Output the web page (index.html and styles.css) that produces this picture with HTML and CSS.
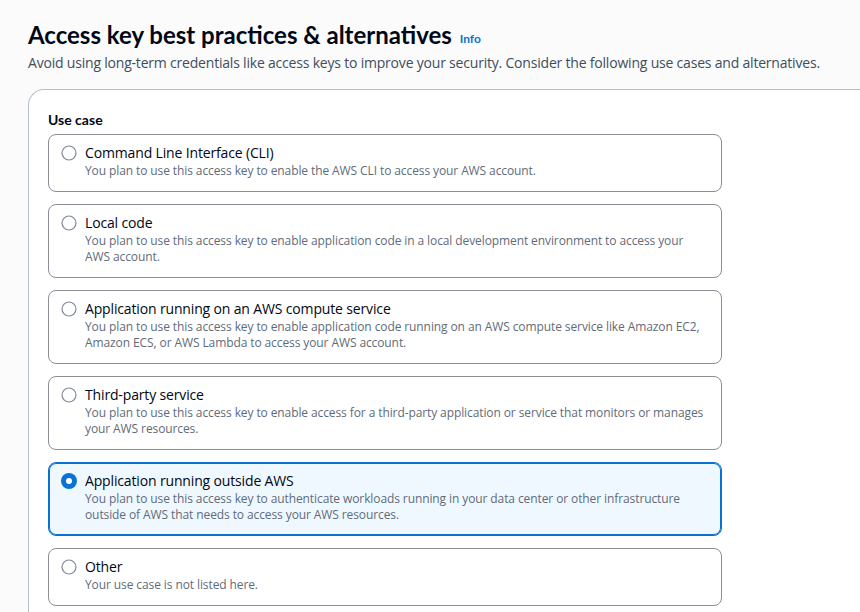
FILE: index.html
```html
<!DOCTYPE html>
<html lang="en">
<head>
<meta charset="utf-8">
<title>Access key best practices &amp; alternatives</title>
<link rel="stylesheet" href="styles.css">
</head>
<body>
<main class="page">
  <header class="header">
    <h1 class="title">Access key best practices &amp; alternatives <a class="info" href="#">Info</a></h1>
    <p class="subtitle">Avoid using long-term credentials like access keys to improve your security. Consider the following use cases and alternatives.</p>
  </header>
  <section class="panel">
    <div class="field-label">Use case</div>
    <div class="tiles">
      <label class="tile">
        <svg class="radio" viewBox="0 0 16 16"><circle cx="8" cy="8" r="7" fill="#fff" stroke="#7d8998" stroke-width="1.2"/></svg>
        <span class="tile-text"><span class="tile-title">Command Line Interface (CLI)</span><span class="tile-desc">You plan to use this access key to enable the AWS CLI to access your AWS account.</span></span>
      </label>
      <label class="tile">
        <svg class="radio" viewBox="0 0 16 16"><circle cx="8" cy="8" r="7" fill="#fff" stroke="#7d8998" stroke-width="1.2"/></svg>
        <span class="tile-text"><span class="tile-title">Local code</span><span class="tile-desc">You plan to use this access key to enable application code in a local development environment to access your AWS account.</span></span>
      </label>
      <label class="tile">
        <svg class="radio" viewBox="0 0 16 16"><circle cx="8" cy="8" r="7" fill="#fff" stroke="#7d8998" stroke-width="1.2"/></svg>
        <span class="tile-text"><span class="tile-title">Application running on an AWS compute service</span><span class="tile-desc">You plan to use this access key to enable application code running on an AWS compute service like Amazon EC2, Amazon ECS, or AWS Lambda to access your AWS account.</span></span>
      </label>
      <label class="tile">
        <svg class="radio" viewBox="0 0 16 16"><circle cx="8" cy="8" r="7" fill="#fff" stroke="#7d8998" stroke-width="1.2"/></svg>
        <span class="tile-text"><span class="tile-title">Third-party service</span><span class="tile-desc">You plan to use this access key to enable access for a third-party application or service that monitors or manages your AWS resources.</span></span>
      </label>
      <label class="tile tile-selected">
        <svg class="radio" viewBox="0 0 16 16"><circle cx="8" cy="8" r="8" fill="#0972d3"/><circle cx="8" cy="8" r="3" fill="#fff"/></svg>
        <span class="tile-text"><span class="tile-title">Application running outside AWS</span><span class="tile-desc">You plan to use this access key to authenticate workloads running in your data center or other infrastructure outside of AWS that needs to access your AWS resources.</span></span>
      </label>
      <label class="tile">
        <svg class="radio" viewBox="0 0 16 16"><circle cx="8" cy="8" r="7" fill="#fff" stroke="#7d8998" stroke-width="1.2"/></svg>
        <span class="tile-text"><span class="tile-title">Other</span><span class="tile-desc">Your use case is not listed here.</span></span>
      </label>
    </div>
  </section>
</main>
</body>
</html>
```

FILE: styles.css
```css
html, body {
  margin: 0;
  padding: 0;
}
body {
  background: #fbfbfb;
  font-family: "Open Sans", "Noto Sans", sans-serif;
  color: #000716;
  overflow: hidden;
}
.page {
  padding: 20px 0 0 28px;
}
.header {
  margin-bottom: 16px;
}
.title {
  margin: 0;
  font-family: Lato, "Open Sans", sans-serif;
  font-size: 24px;
  line-height: 30px;
  font-weight: 700;
  color: #000716;
}
.info {
  font-size: 12px;
  line-height: 16px;
  font-weight: 700;
  color: #0972d3;
  text-decoration: none;
  margin-left: 2px;
  vertical-align: 1px;
}
.subtitle {
  margin: 3px 0 0;
  font-size: 14px;
  line-height: 20px;
  letter-spacing: -0.2px;
  color: #414d5c;
}
.panel {
  background: #fff;
  border: 1px solid #b6bec9;
  border-right: none;
  border-radius: 16px 0 0 0;
  padding: 20px 0 20px 19px;
  margin-right: -40px;
}
.field-label {
  font-family: Lato, "Open Sans", sans-serif;
  font-size: 14px;
  line-height: 20px;
  font-weight: 700;
  margin-bottom: 4px;
}
.tiles {
  display: flex;
  flex-direction: column;
  gap: 12px;
  width: 674px;
}
.tile {
  display: flex;
  align-items: flex-start;
  gap: 8px;
  border: 1px solid #8c8c94;
  border-radius: 8px;
  padding: 8px 12px 12px;
  background: #fff;
}
.tile-selected {
  border-color: #0972d3;
  box-shadow: inset 0 0 0 1px #0972d3;
  background: #f0f8ff;
}
.radio {
  flex: none;
  width: 16px;
  height: 16px;
  margin-top: 2px;
}
.tile-text {
  display: flex;
  flex-direction: column;
}
.tile-title {
  font-size: 14px;
  line-height: 20px;
  letter-spacing: -0.15px;
  color: #000716;
}
.tile-desc {
  font-size: 12px;
  line-height: 16px;
  letter-spacing: -0.1px;
  color: #5f6b7a;
}
```
